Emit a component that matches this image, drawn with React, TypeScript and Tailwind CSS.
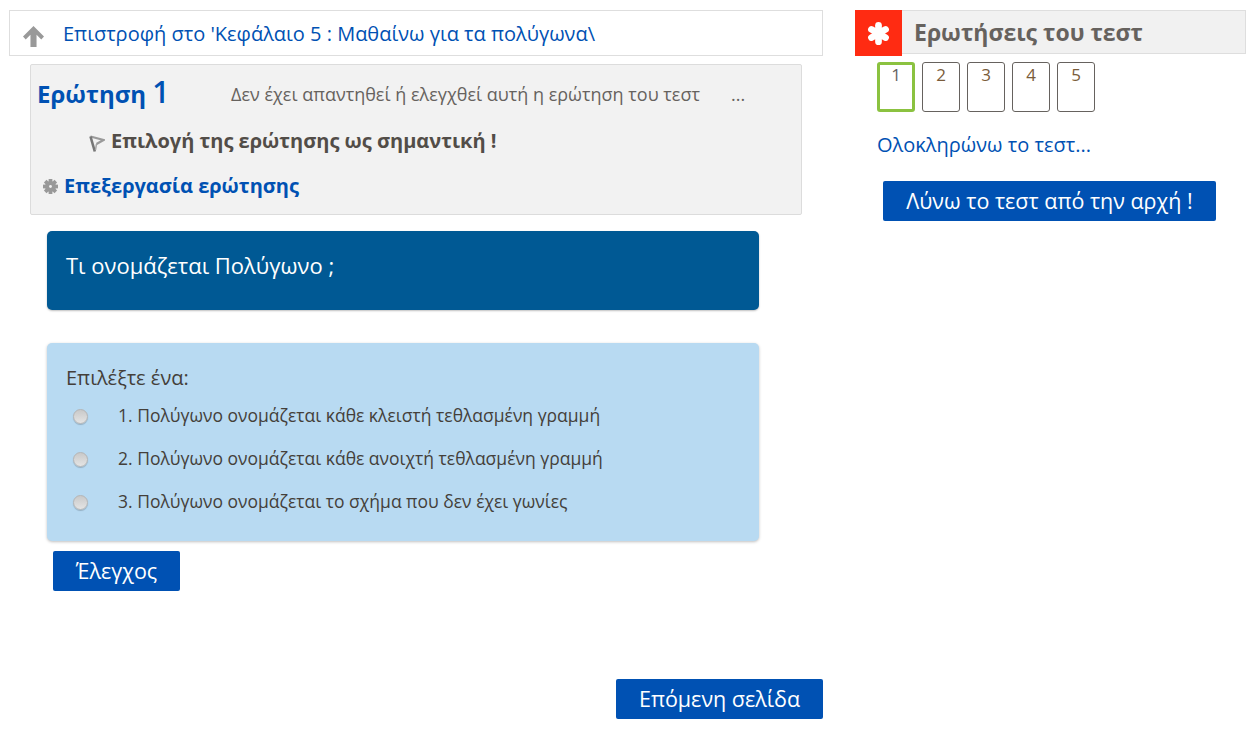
const font = { fontFamily: '"Open Sans", sans-serif' };

function UpArrow() {
  return (
    <svg viewBox="0 0 20 20" aria-hidden className="h-[21px] w-[21px] fill-[#999999]">
      <path d="M10 0 20 10 17.400 12.800 12.900 8.300V20H7.100V8.300L2.600 12.800 0 10z" />
    </svg>
  );
}

function FlagIcon() {
  return (
    <svg viewBox="0 0 16 18" aria-hidden className="h-[18px] w-4">
      <path d="M1.500 2.500 14.500 6 7.500 10" fill="none" stroke="#9a9a9a" strokeWidth="2.200" />
      <path d="M1.500 2.500 5.800 17.500" fill="none" stroke="#777777" strokeWidth="2.600" />
      <path d="M6.500 16 7.500 10" fill="none" stroke="#a5a5a5" strokeWidth="1.500" />
    </svg>
  );
}

function GearIcon() {
  return (
    <svg viewBox="0 0 16 16" aria-hidden className="h-[15px] w-[15px] fill-[#999999]">
      <g>
        <rect x="6" y="0" width="4" height="16" />
        <rect x="6" y="0" width="4" height="16" transform="rotate(45 8 8)" />
        <rect x="6" y="0" width="4" height="16" transform="rotate(90 8 8)" />
        <rect x="6" y="0" width="4" height="16" transform="rotate(135 8 8)" />
        <circle cx="8" cy="8" r="5.800" />
      </g>
      <circle cx="8" cy="8" r="1.500" fill="#f1f1f1" />
    </svg>
  );
}

function AsteriskIcon() {
  return (
    <svg viewBox="0 0 24 24" aria-hidden className="h-[23px] w-[23px] fill-white">
      <g>
        <rect x="8.500" y="0" width="7" height="24" rx="3.500" />
        <rect x="8.500" y="0" width="7" height="24" rx="3.500" transform="rotate(60 12 12)" />
        <rect x="8.500" y="0" width="7" height="24" rx="3.500" transform="rotate(120 12 12)" />
      </g>
    </svg>
  );
}

function Radio() {
  return (
    <span className="mt-[2px] h-[15px] w-[15px] shrink-0 rounded-full border border-[#b5b5b5] bg-[linear-gradient(180deg,#c9c9c9_0%,#e4e4e4_100%)] shadow-[0_1px_1px_rgba(0,0,0,0.2)]" />
  );
}

const answers = [
  "1. Πολύγωνο ονομάζεται κάθε κλειστή τεθλασμένη γραμμή",
  "2. Πολύγωνο ονομάζεται κάθε ανοιχτή τεθλασμένη γραμμή",
  "3. Πολύγωνο ονομάζεται το σχήμα που δεν έχει γωνίες",
];

export default function App() {
  return (
    <div style={font} className="flex h-[729px] w-[1254px] items-start overflow-hidden bg-white text-[#524d48]">
      <main className="ml-[9px] mt-[10px] w-[814px]">
        <div className="flex h-[46px] items-center border border-[#dedede] pl-[13px]">
          <span className="mt-1.5">
            <UpArrow />
          </span>
          <a className="ml-[19px] mt-[2px] text-[20px] text-[#0051b3]">Επιστροφή στο 'Κεφάλαιο 5 : Μαθαίνω για τα πολύγωνα\</a>
        </div>

        <section className="ml-[21px] mt-2 h-[151px] w-[772px] rounded-[2px] border border-[#dcdcdc] bg-[#f2f2f2]">
          <div className="flex h-[56px] items-center pl-[6px]">
            <h3 className="-mt-1 w-[194px] text-[24px] font-bold text-[#0051b3]">
              Ερώτηση <span className="text-[30px] font-semibold">1</span>
            </h3>
            <span className="mt-[2px] text-[18px] text-[#66625e]">Δεν έχει απαντηθεί ή ελεγχθεί αυτή η ερώτηση του τεστ</span>
            <span className="ml-[31px] mt-[2px] text-[18px] text-[#66625e]">...</span>
          </div>
          <div className="mt-[5px] flex h-[30px] items-center pl-[58px]">
            <span className="mt-1">
              <FlagIcon />
            </span>
            <span className="ml-[6px] text-[20px] font-bold leading-none text-[#524d48]">Επιλογή της ερώτησης ως σημαντική !</span>
          </div>
          <div className="mt-[15px] flex items-center pl-[12px]">
            <GearIcon />
            <a className="ml-[6px] text-[20px] font-bold leading-[30px] text-[#0051b3]">Επεξεργασία ερώτησης</a>
          </div>
        </section>

        <div className="ml-[38px] mt-4 flex h-[79px] w-[712px] items-center rounded-[5px] bg-[#005994] pb-[10px] pl-[19px] text-[22px] text-white shadow-[0_1px_2px_rgba(0,0,0,0.25)]">
          Τι ονομάζεται Πολύγωνο ;
        </div>

        <section className="ml-[38px] mt-[33px] h-[198px] w-[712px] rounded-[5px] bg-[#b8daf2] pl-[19px] pt-[22px] shadow-[0_1px_3px_rgba(0,0,0,0.25)]">
          <p className="text-[20px] leading-[26px] text-[#443f3a]">Επιλέξτε ένα:</p>
          <ul className="mt-[11px] flex flex-col gap-[17px]">
            {answers.map((answer) => (
              <li key={answer} className="flex h-[26px] items-center pl-[7px] text-[17.500px] text-[#443f3a]">
                <Radio />
                <span className="ml-[30px]">{answer}</span>
              </li>
            ))}
          </ul>
        </section>

        <button className="ml-[44px] mt-[10px] block h-10 w-[127px] rounded-[2px] bg-[#0051b3] text-[21.500px] text-white">Έλεγχος</button>

        <div className="mt-[88px] flex justify-end">
          <button className="h-10 w-[207px] rounded-[2px] bg-[#0051b3] text-[21.500px] text-white">Επόμενη σελίδα</button>
        </div>
      </main>

      <aside className="ml-8 mt-[10px] w-[391px]">
        <div className="flex items-start">
          <div className="flex h-[46px] w-[47px] items-center justify-center bg-[#ff2b12]">
            <AsteriskIcon />
          </div>
          <h2 className="flex h-[44px] w-[344px] items-center border-b border-r border-t border-[#dedede] bg-[#f1f1f1] pl-[12px] text-[23px] font-bold text-[#66625e]">
            Ερωτήσεις του τεστ
          </h2>
        </div>

        <div className="ml-[22px] mt-[6px] flex gap-[7px]">
          <span className="flex h-[50px] w-[38px] justify-center rounded-[3px] border-[3px] border-[#8bc240] text-[17px] leading-[20px] text-[#66625e]">1</span>
          {["2", "3", "4", "5"].map((n) => (
            <span key={n} className="flex h-[50px] w-[38px] justify-center rounded-[3px] border border-[#66625e] pt-[2px] text-[17px] leading-[20px] text-[#7a5c3a]">
              {n}
            </span>
          ))}
        </div>

        <a className="ml-[22px] mt-[20px] block text-[20px] leading-[26px] text-[#0051b3]">Ολοκληρώνω το τεστ...</a>

        <button className="ml-[28px] mt-[23px] block h-10 w-[333px] rounded-[2px] bg-[#0051b3] text-[21.500px] text-white">Λύνω το τεστ από την αρχή !</button>
      </aside>
    </div>
  );
}
